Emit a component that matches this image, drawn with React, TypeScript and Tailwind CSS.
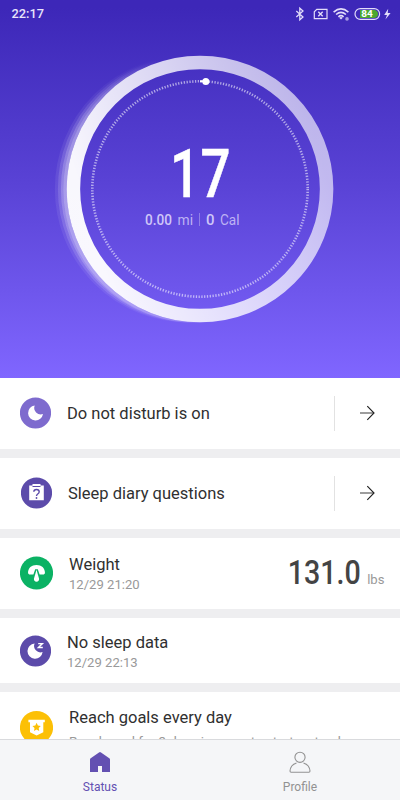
import React from "react";

type RowProps = {
  icon: React.ReactNode;
  title: string;
  sub?: string;
  subClass?: string;
  className: string;
  children?: React.ReactNode;
};

function Row({ icon, title, sub, subClass = "mt-[2px] text-[13.1px]", className, children }: RowProps) {
  return (
    <section className={`flex w-full shrink-0 bg-white ${className}`}>
      {icon}
      <div className="min-w-0 flex-1">
        <h2 className="text-[16.5px] leading-[20px] whitespace-nowrap text-[#303030]">{title}</h2>
        {sub && <p className={`leading-[16px] whitespace-nowrap text-[#999] ${subClass}`}>{sub}</p>}
      </div>
      {children}
    </section>
  );
}

function Arrow() {
  return (
    <div className="flex h-[35px] w-[66px] items-center border-l border-[#e2e2e2] pb-[2px] pl-[25px]">
      <svg width="16" height="16" viewBox="0 0 16 16" fill="none" stroke="#222" strokeWidth="1.15">
        <path d="M0 8H14" stroke="#555" />
        <path d="M7.3 1.2L14 8L7.3 14.8" />
      </svg>
    </div>
  );
}

function StatusBar() {
  return (
    <div className="flex h-[28px] items-center text-white">
      <span className="ml-[11.5px] w-[283.5px] text-[12.8px] font-medium text-[#e8e4fb]">22:17</span>
      <svg width="105" height="28" viewBox="0 0 105 28" fill="none" stroke="#e3ddfa" strokeWidth="1.25">
        <path d="M1.3 11L8 17L4.8 19.8V8.2L8 11L1.3 17" />
        <path d="M21.8 9.3H32V18.7H19.3V11.8Z" strokeWidth="1.2" />
        <path d="M23.3 11.7L27.7 16.3M27.7 11.7L23.3 16.3" strokeWidth="1.3" />
        <g strokeWidth="1.6">
          <path d="M38.6 12.1Q46 5.8 53.4 12.1" />
          <path d="M41.1 14.5Q46 10.3 50.9 14.5" />
          <path d="M43.4 16.8Q46 14.6 48.6 16.8" />
        </g>
        <path d="M44.2 17.7Q46 16.5 47.8 17.7L46 19.6Z" fill="#e3ddfa" stroke="none" />
        <circle cx="52" cy="18.9" r="1.8" fill="#a99ce6" stroke="none" />
        <rect x="60" y="8.6" width="24.6" height="10.8" rx="5.4" strokeWidth="1.2" />
        <path d="M65 10.1H79.5Q83 10.6 83 14T79.5 17.9H65Z" fill="#4da72e" stroke="none" />
        <text x="66.3" y="17.2" fill="#fff" stroke="none" fontSize="9" fontWeight="700" textLength="11.6" lengthAdjust="spacingAndGlyphs">84</text>
        <path d="M93.2 8.7L89.2 14.9H92L90.4 19.5L95.6 13H92.7Z" fill="#e3ddfa" stroke="none" />
      </svg>
    </div>
  );
}

function Dial() {
  return (
    <svg width="400" height="350" viewBox="0 28 400 350" fill="none">
      <defs>
        <linearGradient id="ring" gradientUnits="userSpaceOnUse" x1="90" y1="225" x2="320" y2="155">
          <stop stopColor="#fff" stopOpacity="0.96" />
          <stop offset="0.22" stopColor="#fff" stopOpacity="0.88" />
          <stop offset="0.65" stopColor="#fff" stopOpacity="0.74" />
          <stop offset="1" stopColor="#fff" stopOpacity="0.63" />
        </linearGradient>
        <linearGradient id="trail" gradientUnits="userSpaceOnUse" x1="52" y1="215" x2="190" y2="180">
          <stop stopColor="#fff" stopOpacity="0.2" />
          <stop offset="0.35" stopColor="#fff" stopOpacity="0.17" />
          <stop offset="1" stopColor="#fff" stopOpacity="0" />
        </linearGradient>
        <clipPath id="outside">
          <path clipRule="evenodd" d="M0 28H400V378H0ZM66.7 189a133.3 133.3 0 1 0 266.6 0a133.3 133.3 0 1 0-266.6 0Z" />
        </clipPath>
      </defs>
      <g clipPath="url(#outside)" stroke="url(#trail)" strokeWidth="14">
        <circle cx="188.5" cy="189" r="126.6" strokeOpacity="0.38" />
        <circle cx="191.5" cy="189" r="126.6" strokeOpacity="0.7" />
        <circle cx="194.5" cy="189" r="126.6" />
        <circle cx="197" cy="189.5" r="126.6" />
      </g>
      <circle cx="200" cy="189" r="126.6" stroke="url(#ring)" strokeWidth="13.5" />
      <circle cx="200" cy="189" r="107.7" stroke="#fff" strokeOpacity="0.56" strokeWidth="2.6" strokeDasharray="1.3 1.5195" />
      <path d="M200 81.3H206" stroke="#fff" strokeWidth="2" />
      <circle cx="205.8" cy="81.5" r="3.5" fill="#fff" />
      <g transform="translate(170 197) scale(.8 1)">
        <text fontSize="66" fontWeight="500" fill="#fff" stroke="#fff" strokeWidth=".5">1<tspan x="38.2">7</tspan></text>
      </g>
      <g fill="#cfc6f8">
        <text x="145" y="225" fontSize="15" fontWeight="500" textLength="27" lengthAdjust="spacingAndGlyphs">0.00</text>
        <text x="177.5" y="225" fontSize="14" fillOpacity=".86" textLength="15.5" lengthAdjust="spacingAndGlyphs">mi</text>
        <text x="206" y="225" fontSize="15" fontWeight="500" textLength="8.5" lengthAdjust="spacingAndGlyphs">0</text>
        <text x="220" y="225" fontSize="14" fillOpacity=".86" textLength="19.5" lengthAdjust="spacingAndGlyphs">Cal</text>
      </g>
      <path d="M199.5 213V226" stroke="#fff" strokeOpacity=".3" />
    </svg>
  );
}

export default function App() {
  return (
    <main className="flex h-[800px] w-[400px] flex-col overflow-hidden bg-[#eeeef0] font-[Roboto,sans-serif]">
      <header className="h-[378px] shrink-0 bg-linear-to-b from-[#3d27b8] from-[2%] via-[#5942d5] via-[48%] to-[#8066ff] to-[100%]">
        <StatusBar />
        <Dial />
      </header>

      <div className="flex h-[361px] shrink-0 flex-col gap-[9px] overflow-hidden">
        <Row
          className="h-[71px] items-center pl-[20px]"
          title="Do not disturb is on"
          icon={
            <svg className="mr-[16px] mb-px shrink-0" width="31" height="32" viewBox="0 0 31 32">
              <circle cx="15.5" cy="16" r="15.6" fill="#7e6bce" />
              <path d="M14.7 8.5A7.5 7.5 0 1 0 23 17.1A6.6 6.6 0 0 1 14.7 8.5Z" fill="#fff" />
            </svg>
          }
        >
          <Arrow />
        </Row>
        <Row
          className="h-[71px] items-center pl-[21px]"
          title="Sleep diary questions"
          icon={
            <svg className="mr-[16px] mb-px shrink-0" width="31" height="32" viewBox="0 0 31 32">
              <circle cx="15.5" cy="16" r="15.6" fill="#5c4baa" />
              <path d="M8.2 8.5H11.5V7H19.5V8.5H22.8V23.3H8.2Z" fill="#fff" />
              <path d="M11.5 9.5H19.5" stroke="#5c4baa" strokeWidth="1" />
              <path d="M12.8 14.8Q12.8 12.5 15.5 12.5Q18.2 12.5 18.2 14.7Q18.2 16 16.7 17Q15.5 17.8 15.5 19" fill="none" stroke="#5c4baa" strokeWidth="1.4" />
              <circle cx="15.5" cy="21" r=".9" fill="#5c4baa" />
            </svg>
          }
        >
          <Arrow />
        </Row>
        <Row
          className="h-[71px] items-center pt-px pl-[20px]"
          title="Weight"
          sub="12/29 21:20"
          icon={
            <svg className="mr-[16px] mb-[2px] shrink-0" width="33" height="34" viewBox="0 0 33 34">
              <circle cx="16.5" cy="17" r="16.6" fill="#0bb264" />
              <path d="M8 17.2C8 11.8 11.5 9 16.5 9S25 11.8 25 17.2L23.8 18.4H19.6L17.8 13.2H15.2L13.4 18.4H9.2Z" fill="#fff" />
              <path d="M16.5 13.8L19 22.5A2.6 2.6 0 1 1 14 22.5Z" fill="#fff" />
            </svg>
          }
        >
          <svg width="113" height="50" viewBox="0 0 113 50" className="shrink-0">
            <text x="0.8" y="35" fontSize="33.5" fontWeight="500" fill="#444" textLength="73" lengthAdjust="spacingAndGlyphs">131.0</text>
            <text x="80.2" y="34.5" fontSize="13.5" fill="#999" textLength="17.3" lengthAdjust="spacingAndGlyphs">lbs</text>
          </svg>
        </Row>
        <Row
          className="h-[65px] items-center pt-[2px] pl-[20px]"
          title="No sleep data"
          sub="12/29 22:13"
          icon={
            <svg className="mr-[16px] mb-[2px] shrink-0" width="31" height="32" viewBox="0 0 31 32">
              <circle cx="15.5" cy="16" r="15.6" fill="#5c4baa" />
              <path d="M14.6 8.5A7.6 7.6 0 1 0 22.6 17A6.4 6.4 0 0 1 14.6 8.5Z" fill="#fff" />
              <path d="M18.2 8.6H22.4L18.4 12.5H22.8" fill="none" stroke="#fff" strokeWidth="1.4" />
            </svg>
          }
        />
        <Row
          className="h-[70px] items-start pt-[16px] pl-[20px]"
          title="Reach goals every day"
          sub="Reach goal for 3 days in a row to start a streak"
          subClass="mt-[6px] text-[13.4px]"
          icon={
            <svg className="mt-[2px] mr-[16px] shrink-0" width="33" height="34" viewBox="0 0 33 34">
              <circle cx="16.5" cy="17.5" r="16.6" fill="#fcc006" />
              <path d="M8.4 9.7H24.8V12.2H23.3V22.3L16.6 25.5L10 22.3V12.2H8.4Z" fill="#fff" />
              <path d="M16.6 12.8L17.9 15.5L20.8 15.9L18.7 18L19.2 20.9L16.6 19.5L14 20.9L14.5 18L12.4 15.9L15.3 15.5Z" fill="#fcc006" />
            </svg>
          }
        />
      </div>

      <nav className="grid h-[61px] shrink-0 grid-cols-2 border-t border-[#d9dadd] bg-[#f5f6f8] text-[12px] leading-[16px]">
        <div className="flex flex-col items-center pt-[11px] text-[#6350b2]">
          <svg width="22" height="24" viewBox="0 0 22 24">
            <path d="M1 8.6Q1 7.8 1.7 7.3L10 1.4Q11 .8 12 1.4L20.3 7.3Q21 7.8 21 8.6V21H13V15H9V21H1Z" fill="currentColor" />
          </svg>
          <span className="mt-[4px]">Status</span>
        </div>
        <div className="flex flex-col items-center pt-[11px] text-[#929292]">
          <svg width="22" height="24" viewBox="0 0 22 24" fill="none" stroke="currentColor" strokeWidth="1.1">
            <circle cx="11" cy="6.3" r="5.1" />
            <path d="M7.5 11.9C4 13 1.2 16.2 1 20.1Q1 21.3 2.1 21.3H19.9Q21 21.3 21 20.1C20.8 16.2 18 13 14.5 11.9" />
          </svg>
          <span className="mt-[4px]">Profile</span>
        </div>
      </nav>
    </main>
  );
}
